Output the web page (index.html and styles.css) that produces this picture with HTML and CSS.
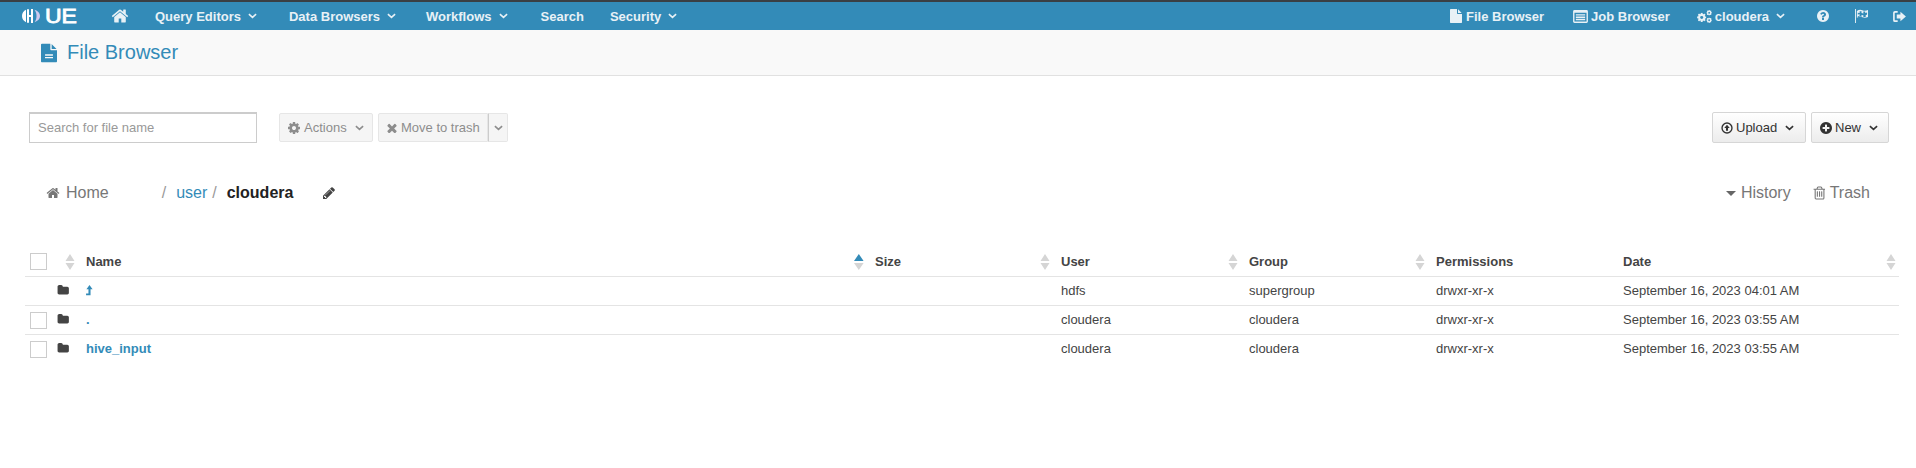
FILE: index.html
```html
<!DOCTYPE html>
<html>
<head>
<title>Hue - File Browser</title>
<meta charset="utf-8" />
<link rel="stylesheet" href="styles.css">
</head>
<body>

<svg class="defs" width="0" height="0">
	<symbol id="i-home" viewBox="0 0 1792 1792"><path d="M1472 992v480q0 26-19 45t-45 19h-384v-384h-256v384h-384q-26 0-45-19t-19-45v-480q0-1 .5-3t.5-3l575-474 575 474q1 2 1 6zm223-69l-62 74q-8 9-21 11h-3q-13 0-21-7l-692-577-692 577q-12 8-24 7-13-2-21-11l-62-74q-8-10-7-23.500t11-21.500l719-599q32-26 76-26t76 26l244 204v-195q0-14 9-23t23-9h192q14 0 23 9t9 23v408l219 182q10 8 11 21.500t-7 23.500z"/></symbol>
	<symbol id="i-file" viewBox="128 0 1536 1792"><path d="M1152 512v-472q22 14 36 28l408 408q14 14 28 36h-472zm-128 32q0 40 28 68t68 28h544v1056q0 40-28 68t-68 28h-1344q-40 0-68-28t-28-68v-1600q0-40 28-68t68-28h800v544z"/></symbol>
	<symbol id="i-filetext" viewBox="128 0 1536 1792"><path d="M1596 476q14 14 28 36h-472v-472q22 14 36 28zm-476 164h544v1056q0 40-28 68t-68 28h-1344q-40 0-68-28t-28-68v-1600q0-40 28-68t68-28h800v544q0 40 28 68t68 28zm160 736v-64q0-14-9-23t-23-9h-704q-14 0-23 9t-9 23v64q0 14 9 23t23 9h704q14 0 23-9t9-23zm0-256v-64q0-14-9-23t-23-9h-704q-14 0-23 9t-9 23v64q0 14 9 23t23 9h704q14 0 23-9t9-23z"/></symbol>
	<symbol id="i-cog" viewBox="128 128 1536 1536"><path d="M1152 896q0-106-75-181t-181-75-181 75-75 181 75 181 181 75 181-75 75-181zm512-109v222q0 12-8 23t-20 13l-185 28q-19 54-39 91 35 50 107 138 10 12 10 25t-9 23q-27 37-99 108t-94 71q-12 0-26-9l-138-108q-44 23-91 38-16 136-29 186-7 28-36 28h-222q-14 0-24.500-8.500t-11.500-21.500l-28-184q-49-16-90-37l-141 107q-10 9-25 9-14 0-25-11-126-114-165-168-7-10-7-23 0-12 8-23 15-21 51-66.500t54-70.500q-27-50-41-99l-183-27q-13-2-21-12.500t-8-23.500v-222q0-12 8-23t19-13l186-28q14-46 39-92-40-57-107-138-10-12-10-24 0-10 9-23 26-36 98.500-107.500t94.500-71.500q13 0 26 10l138 107q44-23 91-38 16-136 29-186 7-28 36-28h222q14 0 24.500 8.500t11.500 21.500l28 184q49 16 90 37l142-107q9-9 24-9 13 0 25 10 129 119 165 170 7 8 7 22 0 12-8 23-15 21-51 66.500t-54 70.500q26 50 41 98l183 28q13 2 21 12.500t8 23.500z"/></symbol>
	<symbol id="i-times" viewBox="256 256 1280 1280"><path d="M1490 1322q0 40-28 68l-136 136q-28 28-68 28t-68-28l-294-294-294 294q-28 28-68 28t-68-28l-136-136q-28-28-28-68t28-68l294-294-294-294q-28-28-28-68t28-68l136-136q28-28 68-28t68 28l294 294 294-294q28-28 68-28t68 28l136 136q28 28 28 68t-28 68l-294 294 294 294q28 28 28 68z"/></symbol>
	<symbol id="i-plus" viewBox="128 128 1536 1536"><path d="M1344 960v-128q0-26-19-45t-45-19h-256v-256q0-26-19-45t-45-19h-128q-26 0-45 19t-19 45v256h-256q-26 0-45 19t-19 45v128q0 26 19 45t45 19h256v256q0 26 19 45t45 19h128q26 0 45-19t19-45v-256h256q26 0 45-19t19-45zm320-64q0 209-103 385.500t-279.500 279.500-385.500 103-385.500-103-279.500-279.500-103-385.500 103-385.500 279.500-279.500 385.500-103 385.500 103 279.500 279.500 103 385.500z"/></symbol>
	<symbol id="i-question" viewBox="128 128 1536 1536"><path d="M1024 1376v-192q0-14-9-23t-23-9h-192q-14 0-23 9t-9 23v192q0 14 9 23t23 9h192q14 0 23-9t9-23zm256-672q0-88-55.500-163t-138.500-116-170-41q-243 0-371 213-15 24 8 42l132 100q7 6 19 6 16 0 25-12 53-68 86-92 34-24 86-24 48 0 85.500 26t37.500 59q0 38-20 61t-68 45q-63 28-115.500 86.500t-52.500 125.500v36q0 14 9 23t23 9h192q14 0 23-9t9-23q0-19 21.500-49.500t54.500-49.500q32-18 49-28.500t46-35 44.500-48 28-60.500 12.500-81zm384 192q0 209-103 385.500t-279.500 279.500-385.500 103-385.500-103-279.500-279.500-103-385.500 103-385.500 279.500-279.500 385.500-103 385.500 103 279.500 279.500 103 385.500z"/></symbol>
	<symbol id="i-folder" viewBox="0 128 1728 1472"><path d="M1728 608v704q0 92-66 158t-158 66h-1216q-92 0-158-66t-66-158v-960q0-92 66-158t158-66h320q92 0 158 66t66 158v32h672q92 0 158 66t66 158z"/></symbol>
	<symbol id="i-pencil" viewBox="128 128 1536 1536"><path d="M491 1536l91-91-235-235-91 91v107h128v128h107zm523-928q0-22-22-22-10 0-17 7l-542 542q-7 7-7 17 0 22 22 22 10 0 17-7l542-542q7-7 7-17zm-54-192l416 416-832 832h-416v-416zm683 96q0 53-37 90l-166 166-416-416 166-165q36-38 90-38 53 0 91 38l235 234q37 39 37 91z"/></symbol>
	<symbol id="i-trash" viewBox="128 128 1408 1536"><path d="M704 736v576q0 14-9 23t-23 9h-64q-14 0-23-9t-9-23v-576q0-14 9-23t23-9h64q14 0 23 9t9 23zm256 0v576q0 14-9 23t-23 9h-64q-14 0-23-9t-9-23v-576q0-14 9-23t23-9h64q14 0 23 9t9 23zm256 0v576q0 14-9 23t-23 9h-64q-14 0-23-9t-9-23v-576q0-14 9-23t23-9h64q14 0 23 9t9 23zm128 724v-948h-896v948q0 22 7 40.500t14.500 27 10.500 8.500h832q3 0 10.500-8.500t14.500-27 7-40.500zm-672-1076h448l-48-117q-7-9-17-11h-317q-10 2-17 11zm928 32v64q0 14-9 23t-23 9h-96v948q0 83-47 143.500t-113 60.500h-832q-66 0-113-58.500t-47-141.500v-952h-96q-14 0-23-9t-9-23v-64q0-14 9-23t23-9h309l70-167q15-37 54-63t79-26h320q40 0 79 26t54 63l70 167h309q14 0 23 9t9 23z"/></symbol>
	<symbol id="i-chev" viewBox="0 0 10 6"><path d="M1 1l4 3.500L9 1" fill="none" stroke="currentColor" stroke-width="1.800"/></symbol>
	<symbol id="i-sort" viewBox="0 0 10 16"><path d="M5 0l4.500 7h-9zM5 16L.5 9h9z"/></symbol>
	<symbol id="i-up" viewBox="0 0 10 16"><path d="M5 0L9.500 6H6.500V15H0V12.500H3.500V6H.5z"/></symbol>
	<symbol id="i-upload" viewBox="0 0 14 14"><circle cx="7" cy="7" r="5.800" fill="none" stroke="currentColor" stroke-width="1.600"/><path d="M7 3.200L10.200 7H8.200V10.300H5.800V7H3.800z"/></symbol>
	<symbol id="i-list" viewBox="0 0 16 14"><path d="M1.500 0h13A1.500 1.500 0 0 1 16 1.500v11a1.500 1.500 0 0 1-1.500 1.500h-13A1.500 1.500 0 0 1 0 12.500v-11A1.500 1.500 0 0 1 1.500 0zM1.500 3v9.500h13V3zM3 4.500h10V6H3zM3 7h10v1.500H3zM3 9.500h10V11H3z" fill-rule="evenodd"/></symbol>
	<symbol id="i-flag" viewBox="0 0 14 15"><path d="M0 0h1v15H0zM2 2q3-2 6-.7t6-.3v7.500q-3 1.500-6 .3t-6 .7zM3 4v2l2-.5v1.800l-2 .4v1l2-.4 2 .2V6.500l2 .3v1.900l2.500-.2V6.700L13 6V3.800l-2 .6V2.700L9 2.600v2.100L7 4.200V2.300L5 2.300v2z" fill-rule="evenodd"/></symbol>
	<symbol id="i-signout" viewBox="0 0 14 12"><path d="M5 0v1.800H2.500q-.7 0-.7.700v7q0 .7.700.7H5V12H2Q0 12 0 10V2Q0 0 2 0zM8 .8L14 6l-6 5.200V8.300H4V3.700h4z"/></symbol>
</svg>

<div class="navbar">
	<div class="logo">
		<svg class="logo-h" viewBox="0 0 18 14"><path d="M4 .8C1.500 2 0 4.300 0 7s1.500 5 4 6.200zM5 .3h2v5.700h2V0h2v14H9V8H7v5.700H5z" fill="#fff"/><path d="M12.500 .8C16 2 18 4.300 18 7s-2 5-5.500 6.200c1.500-2 2-4 2-6.200s-.5-4.200-2-6.200z" fill="#cfc9ee"/></svg>
		<span class="logo-text">UE</span>
	</div>
	<a class="nav-home"><svg class="ic ic-home"><use href="#i-home"/></svg></a>
	<a class="nav-link nav-query">Query Editors<svg class="chev"><use href="#i-chev"/></svg></a>
	<a class="nav-link nav-data">Data Browsers<svg class="chev"><use href="#i-chev"/></svg></a>
	<a class="nav-link">Workflows<svg class="chev"><use href="#i-chev"/></svg></a>
	<a class="nav-link nav-search">Search</a>
	<a class="nav-link">Security<svg class="chev"><use href="#i-chev"/></svg></a>

	<a class="nav-link nav-right"><svg class="ic ic-navfile"><use href="#i-file"/></svg>File Browser</a>
	<a class="nav-link nav-job"><svg class="ic ic-list"><use href="#i-list"/></svg>Job Browser</a>
	<a class="nav-link nav-user">
		<svg class="gears" viewBox="0 0 16 14"><use href="#i-cog" x="0" y="3" width="10" height="10"/><use href="#i-cog" x="10" y="0" width="6" height="6"/><use href="#i-cog" x="10" y="8" width="6" height="6"/></svg>
		cloudera<svg class="chev"><use href="#i-chev"/></svg></a>
	<a class="nav-icon nav-help"><svg class="ic ic-12"><use href="#i-question"/></svg></a>
	<a class="nav-icon"><svg class="ic ic-flag"><use href="#i-flag"/></svg></a>
	<a class="nav-icon nav-last"><svg class="ic ic-out"><use href="#i-signout"/></svg></a>
</div>

<div class="subnav">
	<svg class="ic ic-title"><use href="#i-filetext"/></svg>
	<span class="subnav-title">File Browser</span>
</div>

<div class="toolbar">
	<input class="search" type="text" placeholder="Search for file name" />
	<a class="btn-off btn-actions"><svg class="ic ic-13"><use href="#i-cog"/></svg>Actions<svg class="chev chev-off"><use href="#i-chev"/></svg></a>
	<a class="btn-off btn-trash"><svg class="ic ic-10"><use href="#i-times"/></svg>Move to trash</a>
	<a class="btn-off btn-split"><svg class="chev chev-off"><use href="#i-chev"/></svg></a>
	<a class="btn btn-upload"><svg class="ic ic-13"><use href="#i-upload"/></svg>Upload<svg class="chev chev-dark"><use href="#i-chev"/></svg></a>
	<a class="btn btn-new"><svg class="ic ic-13"><use href="#i-plus"/></svg>New<svg class="chev chev-dark"><use href="#i-chev"/></svg></a>
</div>

<div class="crumbs">
	<a class="crumb-home"><svg class="ic ic-crumb"><use href="#i-home"/></svg>Home</a>
	<span class="crumb-sep first">/</span>
	<a class="crumb-link">user</a>
	<span class="crumb-sep">/</span>
	<b class="crumb-now">cloudera</b>
	<svg class="ic ic-pencil"><use href="#i-pencil"/></svg>
	<a class="crumb-side crumb-history"><i class="caret"></i>History</a>
	<a class="crumb-side crumb-trash"><svg class="ic ic-trash"><use href="#i-trash"/></svg>Trash</a>
</div>

<table class="files">
	<colgroup>
		<col class="c-check"><col class="c-icon"><col class="c-name"><col class="c-size"><col class="c-user"><col class="c-group"><col class="c-perm"><col class="c-date">
	</colgroup>
	<thead>
		<tr>
			<th><span class="check"></span></th>
			<th><div class="th-in"><svg class="sort"><use href="#i-sort"/></svg></div></th>
			<th><div class="th-in">Name<svg class="sort sort-on"><path d="M4.800 0l4.800 7H0z"/><path d="M4.800 16L0 9h9.600z" fill="#d5d5d5"/></svg></div></th>
			<th><div class="th-in">Size<svg class="sort"><use href="#i-sort"/></svg></div></th>
			<th><div class="th-in">User<svg class="sort"><use href="#i-sort"/></svg></div></th>
			<th><div class="th-in">Group<svg class="sort"><use href="#i-sort"/></svg></div></th>
			<th><div class="th-in">Permissions</div></th>
			<th><div class="th-in">Date<svg class="sort"><use href="#i-sort"/></svg></div></th>
		</tr>
	</thead>
	<tbody>
		<tr>
			<td></td>
			<td><svg class="ic ic-folder"><use href="#i-folder"/></svg></td>
			<td><a class="file"><svg class="ic ic-up"><use href="#i-up"/></svg></a></td>
			<td></td><td>hdfs</td><td>supergroup</td><td>drwxr-xr-x</td><td>September 16, 2023 04:01 AM</td>
		</tr>
		<tr>
			<td><span class="check"></span></td>
			<td><svg class="ic ic-folder"><use href="#i-folder"/></svg></td>
			<td><a class="file">.</a></td>
			<td></td><td>cloudera</td><td>cloudera</td><td>drwxr-xr-x</td><td>September 16, 2023 03:55 AM</td>
		</tr>
		<tr>
			<td><span class="check"></span></td>
			<td><svg class="ic ic-folder"><use href="#i-folder"/></svg></td>
			<td><a class="file">hive_input</a></td>
			<td></td><td>cloudera</td><td>cloudera</td><td>drwxr-xr-x</td><td>September 16, 2023 03:55 AM</td>
		</tr>
	</tbody>
</table>

</body>
</html>
```

FILE: styles.css
```css
html, body {
	margin: 0;
	height: 468px;
	overflow: hidden;
}
body {
	background: #fff;
	color: #444;
	font-family: "Liberation Sans", Arial, sans-serif;
	font-size: 13px;
}
.defs {
	display: block;
	height: 0;
}
.ic {
	fill: currentColor;
	flex: none;
}

/* top bar */
.navbar {
	display: flex;
	align-items: center;
	height: 28px;
	padding-left: 22px;
	border-top: 2px solid #3a3f44;
	background: #338bb8;
	color: #e8f1f6;
	font-weight: bold;
}
.logo {
	display: flex;
	align-items: center;
	width: 89px;
	color: #fff;
}
.logo-h {
	width: 18px;
	height: 14px;
}
.logo-text {
	margin-left: 5px;
	font-size: 20px;
	line-height: 14px;
	font-weight: normal;
	transform: scaleX(1.150);
	transform-origin: left center;
	-webkit-text-stroke: .8px #fff;
}
.nav-home {
	display: flex;
	margin-right: 26px;
}
.ic-home {
	width: 18px;
	height: 18px;
}
.nav-link {
	display: flex;
	align-items: center;
	gap: 3px;
	margin-right: 33px;
	white-space: nowrap;
}
.nav-query {
	margin-right: 32px;
}
.nav-data {
	margin-right: 30px;
}
.nav-search {
	margin-right: 26px;
}
.chev {
	flex: none;
	width: 9px;
	height: 6px;
	margin-left: 4px;
	color: #e8f1f6;
}
.nav-right {
	margin-left: auto;
	gap: 4px;
	margin-right: 29px;
}
.nav-job {
	margin-right: 27px;
}
.nav-user {
	margin-right: 28px;
}
.ic-navfile {
	width: 12px;
	height: 14px;
}
.ic-list {
	width: 15px;
	height: 13px;
}
.gears {
	width: 15px;
	height: 13px;
	fill: currentColor;
}
.nav-icon {
	display: flex;
	width: 13px;
	margin-right: 25px;
}
.nav-help {
	margin-left: 4px;
}
.nav-last {
	margin-right: 10px;
}
.ic-12 {
	width: 12px;
	height: 12px;
}
.ic-flag {
	width: 13px;
	height: 14px;
}
.ic-out {
	width: 13px;
	height: 11px;
}

/* page title */
.subnav {
	display: flex;
	align-items: center;
	height: 45px;
	padding-left: 41px;
	background: #f9f9f9;
	border-bottom: 1px solid #e1e1e1;
	color: #338bb8;
}
.ic-title {
	width: 16px;
	height: 20px;
}
.subnav-title {
	margin-left: 10px;
	font-size: 20px;
}

/* toolbar */
.toolbar {
	display: flex;
	align-items: center;
	height: 31px;
	margin: 36px 27px 0 29px;
}
.search {
	box-sizing: border-box;
	width: 228px;
	height: 31px;
	padding: 0 8px 2px;
	border: 1px solid #ccc;
	border-top-width: 2px;
	outline: none;
	font: 13px "Liberation Sans", Arial, sans-serif;
}
.search::placeholder {
	color: #999;
}
.btn-off {
	display: flex;
	align-items: center;
	box-sizing: border-box;
	height: 29px;
	gap: 4px;
	border: 1px solid #e6e6e6;
	background: #f5f5f5;
	color: #8d8d8d;
	border-radius: 2px;
	white-space: nowrap;
}
.btn-actions {
	width: 94px;
	margin-left: 22px;
	padding-left: 8px;
}
.chev-off {
	margin-left: 4px;
	color: #8d8d8d;
}
.btn-trash {
	width: 110px;
	margin-left: 5px;
	padding-left: 8px;
	border-radius: 2px 0 0 2px;
}
.btn-split {
	width: 20px;
	border-left: 1px solid #ccc;
	border-radius: 0 2px 2px 0;
}
.btn-split .chev {
	margin-left: 5px;
}
.btn {
	display: flex;
	align-items: center;
	box-sizing: border-box;
	height: 31px;
	gap: 3px;
	padding-left: 8px;
	border: 1px solid #d6d6d6;
	border-radius: 2px;
	background: linear-gradient(#fff, #ececec);
	color: #333;
	white-space: nowrap;
}
.btn-upload {
	width: 94px;
	margin-left: auto;
}
.btn-new {
	width: 78px;
	margin-left: 5px;
}
.chev-dark {
	margin-left: 5px;
	color: #333;
}
.ic-13 {
	width: 12px;
	height: 12px;
}
.ic-10 {
	width: 10px;
	height: 10px;
}

/* breadcrumb row */
.crumbs {
	display: flex;
	align-items: center;
	height: 24px;
	margin: 38px 46px 0 46px;
	font-size: 16px;
	color: #777;
}
.crumb-home {
	display: flex;
	align-items: center;
	gap: 6px;
}
.ic-crumb {
	width: 14px;
	height: 14px;
}
.crumb-sep {
	margin: 0 10px 0 5px;
	color: #999;
}
.crumb-sep.first {
	margin-left: 53px;
}
.crumb-link {
	color: #338bb8;
}
.ic-pencil {
	width: 12px;
	height: 12px;
	margin-left: 30px;
	color: #444;
}
.crumb-now {
	color: #222;
}
.crumb-side {
	display: flex;
	align-items: center;
}
.crumb-history {
	margin-left: auto;
}
.caret {
	width: 0;
	height: 0;
	margin-right: 5px;
	border: 5px solid transparent;
	border-top-color: #666;
	border-bottom: 0;
}
.crumb-trash {
	margin-left: 22px;
	gap: 5px;
}
.ic-trash {
	width: 12px;
	height: 14px;
}

/* file table */
.files {
	table-layout: fixed;
	width: 1874px;
	margin: 42px 0 0 25px;
	border-collapse: collapse;
}
.c-check { width: 27px; }
.c-icon { width: 26px; }
.c-name { width: 789px; }
.c-size { width: 186px; }
.c-user { width: 188px; }
.c-group { width: 187px; }
.c-perm { width: 187px; }
.c-date { width: 284px; }
th, td {
	height: 26px;
	padding: 0 3px 2px 8px;
	text-align: left;
	font-size: 13px;
}
th {
	height: 29px;
	padding-bottom: 0;
	color: #444;
}
th:first-child, td:first-child, td:nth-child(2) {
	padding-left: 5px;
}
td:first-child {
	padding-bottom: 0;
}
tr {
	border-bottom: 1px solid #e4e4e4;
}
tbody tr:last-child {
	border-bottom: 0;
}
.th-in {
	display: flex;
	align-items: center;
	justify-content: space-between;
}
.sort {
	width: 10px;
	height: 16px;
	margin-left: auto;
	fill: #d5d5d5;
}
.sort-on {
	fill: #338bb8;
}
.check {
	display: block;
	box-sizing: border-box;
	width: 17px;
	height: 17px;
	background: #fff;
	border: 1px solid #ccc;
}
.ic-folder {
	display: block;
	width: 12px;
	height: 10px;
	color: #444;
}
.file {
	color: #338bb8;
	font-weight: bold;
}
.ic-up {
	display: block;
	width: 7px;
	height: 11px;
}
```
